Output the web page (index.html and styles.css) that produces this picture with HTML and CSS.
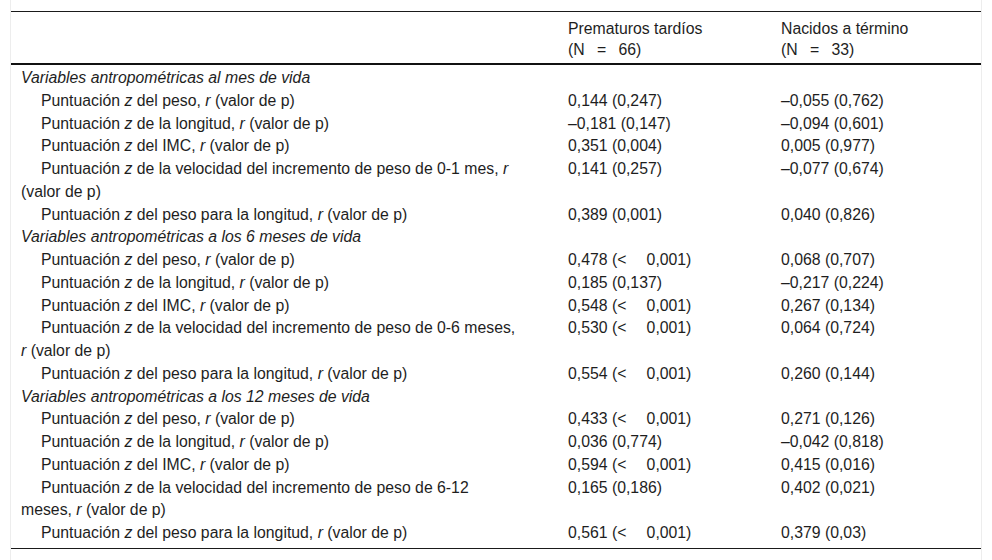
FILE: index.html
```html
<!DOCTYPE html>
<html lang="es">
<head>
<meta charset="utf-8">
<title>Tabla</title>
<link rel="stylesheet" href="styles.css">
</head>
<body>
<div class="wrap">
<table class="tbl">
  <colgroup>
    <col class="c1"><col class="c2"><col class="c3">
  </colgroup>
  <thead>
    <tr>
      <th></th>
      <th>Prematuros tardíos<br>(N&ensp;&nbsp;=&ensp;&nbsp;66)</th>
      <th>Nacidos a término<br>(N&ensp;&nbsp;=&ensp;&nbsp;33)</th>
    </tr>
  </thead>
  <tbody>
    <tr class="sec first"><td colspan="3">Variables antropométricas al mes de vida</td></tr>
    <tr><td class="lbl">Puntuación <i>z</i> del peso, <i>r</i> (valor de p)</td><td>0,144 (0,247)</td><td>–0,055 (0,762)</td></tr>
    <tr><td class="lbl">Puntuación <i>z</i> de la longitud, <i>r</i> (valor de p)</td><td>–0,181 (0,147)</td><td>–0,094 (0,601)</td></tr>
    <tr><td class="lbl">Puntuación <i>z</i> del IMC, <i>r</i> (valor de p)</td><td>0,351 (0,004)</td><td>0,005 (0,977)</td></tr>
    <tr><td class="lbl">Puntuación <i>z</i> de la velocidad del incremento de peso de 0-1 mes, <i>r</i><br>(valor de p)</td><td>0,141 (0,257)</td><td>–0,077 (0,674)</td></tr>
    <tr><td class="lbl">Puntuación <i>z</i> del peso para la longitud, <i>r</i> (valor de p)</td><td>0,389 (0,001)</td><td>0,040 (0,826)</td></tr>
    <tr class="sec"><td colspan="3">Variables antropométricas a los 6 meses de vida</td></tr>
    <tr><td class="lbl">Puntuación <i>z</i> del peso, <i>r</i> (valor de p)</td><td>0,478 (&lt;&emsp;&nbsp;0,001)</td><td>0,068 (0,707)</td></tr>
    <tr><td class="lbl">Puntuación <i>z</i> de la longitud, <i>r</i> (valor de p)</td><td>0,185 (0,137)</td><td>–0,217 (0,224)</td></tr>
    <tr><td class="lbl">Puntuación <i>z</i> del IMC, <i>r</i> (valor de p)</td><td>0,548 (&lt;&emsp;&nbsp;0,001)</td><td>0,267 (0,134)</td></tr>
    <tr><td class="lbl">Puntuación <i>z</i> de la velocidad del incremento de peso de 0-6 meses,<br><i>r</i> (valor de p)</td><td>0,530 (&lt;&emsp;&nbsp;0,001)</td><td>0,064 (0,724)</td></tr>
    <tr><td class="lbl">Puntuación <i>z</i> del peso para la longitud, <i>r</i> (valor de p)</td><td>0,554 (&lt;&emsp;&nbsp;0,001)</td><td>0,260 (0,144)</td></tr>
    <tr class="sec"><td colspan="3">Variables antropométricas a los 12 meses de vida</td></tr>
    <tr><td class="lbl">Puntuación <i>z</i> del peso, <i>r</i> (valor de p)</td><td>0,433 (&lt;&emsp;&nbsp;0,001)</td><td>0,271 (0,126)</td></tr>
    <tr><td class="lbl">Puntuación <i>z</i> de la longitud, <i>r</i> (valor de p)</td><td>0,036 (0,774)</td><td>–0,042 (0,818)</td></tr>
    <tr><td class="lbl">Puntuación <i>z</i> del IMC, <i>r</i> (valor de p)</td><td>0,594 (&lt;&emsp;&nbsp;0,001)</td><td>0,415 (0,016)</td></tr>
    <tr><td class="lbl">Puntuación <i>z</i> de la velocidad del incremento de peso de 6-12<br>meses, <i>r</i> (valor de p)</td><td>0,165 (0,186)</td><td>0,402 (0,021)</td></tr>
    <tr class="last"><td class="lbl">Puntuación <i>z</i> del peso para la longitud, <i>r</i> (valor de p)</td><td>0,561 (&lt;&emsp;&nbsp;0,001)</td><td>0,379 (0,03)</td></tr>
  </tbody>
</table>
</div>
</body>
</html>
```
FILE: styles.css
```css
html, body {
  margin: 0;
  padding: 0;
  background: #ffffff;
}

body {
  font-family: "Liberation Sans", Arial, sans-serif;
  font-size: 15.8px;
  color: #1e1e1e;
}

.wrap {
  margin: 0 10px;
  padding-top: 11px;
  min-height: 549px;
  border-left: 1px solid #ededed;
  border-right: 1px solid #ededed;
}

.tbl {
  width: 100%;
  border-collapse: collapse;
  table-layout: fixed;
  border-top: 1px solid #1a1a1a;
  border-bottom: 1px solid #1a1a1a;
}

.c1 { width: 547px; }
.c2 { width: 213px; }
.c3 { width: auto; }

.tbl th {
  font-weight: normal;
  text-align: left;
  vertical-align: top;
  line-height: 21px;
  padding: 6px 10px 3px 10px;
  border-bottom: 2px solid #111111;
}

.tbl td {
  text-align: left;
  vertical-align: top;
  line-height: 22.75px;
  padding: 0 10px;
}

.tbl .lbl {
  text-indent: 20px;
}

.tbl .sec td {
  font-style: italic;
}

.tbl .first td {
  padding-top: 2px;
}

.tbl .last td {
  padding-bottom: 3px;
}
```
